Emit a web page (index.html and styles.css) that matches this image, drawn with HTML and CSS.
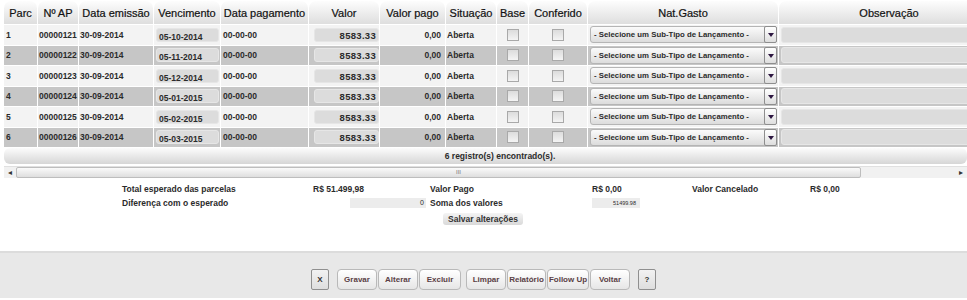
FILE: index.html
```html
<!DOCTYPE html>
<html lang="pt-BR">
<head>
  <meta charset="UTF-8">
  <title>Parcelas</title>
  <link rel="stylesheet" href="styles.css">
</head>
<body>
  <div class="grade">
    <table class="lista">
      <colgroup>
        <col style="width:33px"><col style="width:40px"><col style="width:74px"><col style="width:66px">
        <col style="width:87px"><col style="width:70px"><col style="width:65px"><col style="width:50px">
        <col style="width:31px"><col style="width:58px"><col style="width:190px"><col style="width:220px">
      </colgroup>
      <thead>
        <tr>
          <th>Parc</th><th>Nº AP</th><th>Data emissão</th><th>Vencimento</th><th>Data pagamento</th>
          <th>Valor</th><th>Valor pago</th><th>Situação</th><th>Base</th><th>Conferido</th>
          <th>Nat.Gasto</th><th>Observação</th>
        </tr>
      </thead>
      <tbody id="linhas"></tbody>
    </table>
    <div class="rodape-lista">6 registro(s) encontrado(s).</div>
    <div class="rolagem">
      <span class="seta">&#9666;</span>
      <span class="barra-rolagem">III</span>
      <span class="trilho"></span>
      <span class="seta">&#9656;</span>
    </div>
  </div>

  <div class="resumo">
    <span class="rotulo">Total esperado das parcelas</span>
    <span>R$ 51.499,98</span>
    <span>Valor Pago</span>
    <span>R$ 0,00</span>
    <span>Valor Cancelado</span>
    <span>R$ 0,00</span>

    <span class="rotulo">Diferença com o esperado</span>
    <span class="campo-dif">0</span>
    <span>Soma dos valores</span>
    <span class="campo-soma">51499.98</span>
    <span></span>
    <span></span>

    <button class="salvar">Salvar alterações</button>
  </div>

  <div class="barra">
    <button class="quadrado">X</button>
    <span class="grupo">
      <button class="botao">Gravar</button>
      <button class="botao">Alterar</button>
      <button class="botao largo">Excluir</button>
    </span>
    <span class="grupo">
      <button class="botao">Limpar</button>
      <button class="botao estreito">Relatório</button>
      <button class="botao largo">Follow Up</button>
      <button class="botao">Voltar</button>
    </span>
    <button class="quadrado">?</button>
  </div>

  <script>
    var parcelas = [
      ['1', '00000121', '05-10-2014'],
      ['2', '00000122', '05-11-2014'],
      ['3', '00000123', '05-12-2014'],
      ['4', '00000124', '05-01-2015'],
      ['5', '00000125', '05-02-2015'],
      ['6', '00000126', '05-03-2015']
    ];
    var corpo = document.getElementById('linhas');
    parcelas.forEach(function(p, i){
      var tr = document.createElement('tr');
      tr.className = i % 2 ? 'par' : 'impar';
      tr.innerHTML =
        '<td>' + p[0] + '</td>' +
        '<td class="ap">' + p[1] + '</td>' +
        '<td class="ap">30-09-2014</td>' +
        '<td><span class="caixa data">' + p[2] + '</span></td>' +
        '<td>00-00-00</td>' +
        '<td><span class="caixa valor">8583.33</span></td>' +
        '<td class="direita">0,00</td>' +
        '<td class="ap">Aberta</td>' +
        '<td class="centro"><span class="check"></span></td>' +
        '<td class="centro"><span class="check"></span></td>' +
        '<td><span class="selecao">- Selecione um Sub-Tipo de Lançamento -<span class="abrir"></span></span></td>' +
        '<td><span class="caixa obs"></span></td>';
      corpo.appendChild(tr);
    });
  </script>
</body>
</html>
```

FILE: styles.css
```css
body
{
  margin:0;
  font-family:"Liberation Sans", Arial, sans-serif;
  color:#2b2b2b;
  background:#fff;
}
.grade
{
  width:964px;
  margin-left:3px;
  overflow:hidden;
}
.lista
{
  table-layout:fixed;
  width:990px;
  border-collapse:separate;
  border-spacing:1px;
  font-size:8.5px;
  font-weight:bold;
}
.lista th
{
  height:23px;
  padding:0;
  font-size:11px;
  font-weight:normal;
  color:#111;
  background:linear-gradient(#fdfdfd, #dedede);
  border-radius:7px 7px 0 0;
  white-space:nowrap;
  -webkit-text-stroke:0.2px #111;
}
.lista td
{
  height:19.5px;
  padding:0 0 0 2px;
  white-space:nowrap;
  overflow:hidden;
}
.impar td
{
  background:#f3f3f3;
}
.par td
{
  background:#c6c6c6;
}
.lista td.ap
{
  padding-left:1px;
}
.lista td.direita
{
  text-align:right;
  padding-right:4px;
}
.lista td.centro
{
  text-align:center;
  padding:0;
}
.caixa
{
  display:block;
  height:14px;
  line-height:17px;
  background:#dcdcdc;
  border:1px solid #e6e6e6;
  border-radius:3px;
  box-sizing:border-box;
}
.data
{
  width:63px;
  padding-left:2px;
}
.valor
{
  width:65px;
  margin-left:3px;
  text-align:right;
  padding-right:2px;
  font-size:9.5px;
  line-height:13px;
  letter-spacing:0.3px;
}
.obs
{
  width:230px;
  height:16px;
}
.check
{
  display:inline-block;
  width:10px;
  height:10px;
  vertical-align:middle;
  border:1px solid #a9a9a9;
  background:linear-gradient(#dcdcdc, #f4f4f4);
}
.selecao
{
  position:relative;
  display:block;
  width:187px;
  height:17px;
  line-height:16px;
  padding-left:3px;
  box-sizing:border-box;
  border:1px solid #b5b5b5;
  border-radius:3px;
  background:linear-gradient(#fbfbfb, #dcdcdc);
  font-size:7.8px;
}
.abrir
{
  position:absolute;
  right:-1px;
  top:-1px;
  width:13px;
  height:17px;
  box-sizing:border-box;
  border:1px solid #8e8e8e;
  border-radius:2px;
  background:linear-gradient(#ffffff, #dedede);
}
.abrir:after
{
  content:"";
  position:absolute;
  left:3px;
  top:6px;
  border-left:3px solid transparent;
  border-right:3px solid transparent;
  border-top:4px solid #2c1640;
}
.rodape-lista
{
  height:16px;
  line-height:16px;
  margin:0 0 0 1px;
  padding-left:29px;
  text-align:center;
  font-size:8.5px;
  font-weight:bold;
  background:linear-gradient(#fcfcfc, #d6d6d6);
  border-radius:6px;
}
.rolagem
{
  display:flex;
  height:12px;
  margin-top:2px;
  margin-left:1px;
  background:#f1f1f1;
  border-top:1px solid #e0e0e0;
  box-sizing:border-box;
}
.seta
{
  width:12px;
  font-size:8px;
  line-height:11px;
  text-align:center;
  color:#333;
}
.barra-rolagem
{
  width:845px;
  box-sizing:border-box;
  padding-left:40px;
  border:1px solid #bdbdbd;
  border-radius:2px;
  background:linear-gradient(#fafafa, #dedede);
  font-size:6px;
  line-height:9px;
  text-align:center;
  color:#777;
}
.trilho
{
  flex:1;
}
.resumo
{
  display:grid;
  grid-template-columns:191px 117px 162px 100px 118px 34px;
  grid-auto-rows:14px;
  margin:4px 0 0 122px;
  font-size:8.5px;
  font-weight:bold;
  align-items:center;
}
.resumo span
{
  white-space:nowrap;
}
.campo-dif
{
  justify-self:end;
  width:76px;
  height:10px;
  line-height:10px;
  margin-right:4px;
  padding-right:2px;
  box-sizing:border-box;
  text-align:right;
  background:#ececec;
  font-weight:normal;
  font-size:7px;
}
.campo-soma
{
  width:48px;
  height:10px;
  line-height:10px;
  padding-right:4px;
  box-sizing:border-box;
  text-align:right;
  background:#ececec;
  font-size:5.5px;
  font-weight:normal;
}
.salvar
{
  grid-column:1 / -1;
  justify-self:center;
  width:80px;
  height:12px;
  margin-top:3px;
  padding:0;
  border:none;
  border-radius:3px;
  background:linear-gradient(#f4f4f4, #d9d9d9);
  font-family:inherit;
  font-size:8.5px;
  font-weight:bold;
  color:#333;
}
.barra
{
  display:flex;
  justify-content:center;
  align-items:center;
  gap:8px;
  height:47px;
  margin-top:27px;
  padding-top:8px;
  box-sizing:border-box;
  background:#e8e8e8;
  border-top:2px solid #dcdcdc;
}
.grupo
{
  display:flex;
  gap:1px;
}
.botao
{
  width:40px;
  height:21px;
  padding:0;
  border:1px solid #b9b9b9;
  border-radius:4px;
  background:linear-gradient(#ffffff, #e6e6e6);
  font-family:inherit;
  font-size:8px;
  font-weight:bold;
  color:#5a3f45;
  white-space:nowrap;
}
.largo
{
  width:42px;
}
.estreito
{
  width:39px;
}
.grupo + .grupo
{
  margin-left:-3px;
}
.quadrado
{
  width:18px;
  height:21px;
  padding:0;
  border:1px solid #8f8f8f;
  border-radius:2px;
  background:linear-gradient(#f2f2f2, #dedede);
  font-family:inherit;
  font-size:8px;
  font-weight:bold;
  color:#333;
}
```
